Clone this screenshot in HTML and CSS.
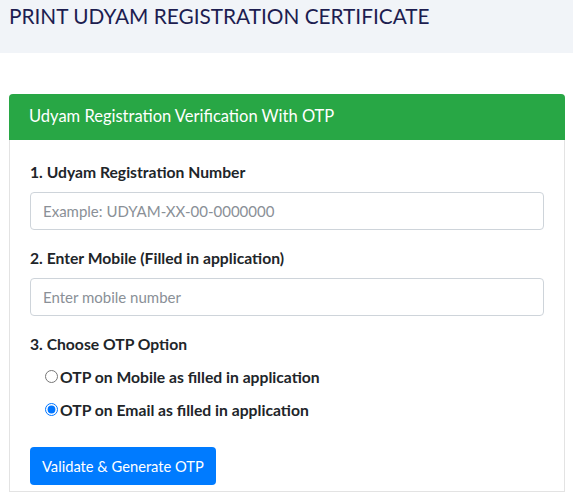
FILE: index.html
```html
<!DOCTYPE html>
<html lang="en">
<head>
    <meta charset="UTF-8">
    <meta name="viewport" content="width=device-width, initial-scale=1.0">
    <title>Print Udyam Registration Certificate</title>
    <link rel="stylesheet" href="styles.css">
</head>
<body>
    <div class="page-title">
        <h1>PRINT UDYAM REGISTRATION CERTIFICATE</h1>
    </div>

    <div class="card">
        <div class="card-header">Udyam Registration Verification With OTP</div>
        <div class="card-body">
            <div class="form-group">
                <label for="udyamNo">1. Udyam Registration Number</label>
                <input type="text" id="udyamNo" class="form-control" placeholder="Example: UDYAM-XX-00-0000000">
            </div>
            <div class="form-group">
                <label for="mobile">2. Enter Mobile (Filled in application)</label>
                <input type="text" id="mobile" class="form-control" placeholder="Enter mobile number">
            </div>
            <div class="form-group">
                <label>3. Choose OTP Option</label>
                <div class="radio-list">
                    <label class="radio"><input type="radio" name="otp" value="mobile">OTP on Mobile as filled in application</label>
                    <label class="radio"><input type="radio" name="otp" value="email" checked>OTP on Email as filled in application</label>
                </div>
            </div>
            <button class="btn-primary">Validate &amp; Generate OTP</button>
        </div>
    </div>
</body>
</html>
```

FILE: styles.css
```css
body {
    margin: 0;
    font-family: Lato, "Open Sans", sans-serif;
    color: #212529;
    background-color: white;
}
.page-title {
    background-color: #f1f4f8;
    height: 53px;
    padding: 0 9px;
}
.page-title h1 {
    margin: 0;
    padding-top: 1px;
    font-size: 20.8px;
    font-weight: 400;
    color: #1d1d50;
    line-height: 30px;
}
.card {
    margin: 41px 8px 0 9px;
    border: 1px solid #e3e3e3;
    border-top: none;
    border-radius: 4px 4px 0 0;
}
.card-header {
    background-color: #28a745;
    color: white;
    font-size: 16.5px;
    height: 46px;
    line-height: 44px;
    padding: 0 20px;
    border-radius: 4px 4px 0 0;
    margin: 0 -1px;
}
.card-body {
    padding: 23px 20px 6px 20px;
}
.form-group {
    margin-bottom: 19px;
}
.form-group > label {
    display: block;
    font-weight: 700;
    font-size: 15.7px;
    margin-bottom: 11px;
}
.form-control {
    display: block;
    box-sizing: border-box;
    width: 100%;
    height: 38px;
    padding: 6px 12px;
    font-family: inherit;
    font-size: 15px;
    border: 1px solid #ced4da;
    border-radius: 4px;
}
.form-control::placeholder {
    color: #8a9097;
}
.radio-list {
    padding-left: 14px;
    margin-top: 12px;
}
.radio {
    display: flex;
    align-items: center;
    font-weight: 700;
    font-size: 15.7px;
    height: 23px;
    margin-bottom: 10px;
}
.radio input {
    margin: 0 2px 0 1px;
    width: 13px;
    height: 13px;
}
.btn-primary {
    margin-top: 7px;
    background-color: #007bff;
    color: white;
    border: none;
    border-radius: 4px;
    padding: 0 12px;
    height: 38px;
    font-family: inherit;
    font-size: 14.7px;
    cursor: pointer;
}
```
